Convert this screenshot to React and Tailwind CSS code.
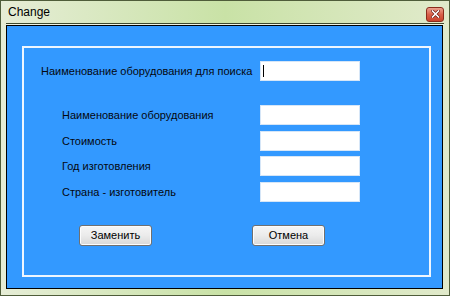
import React from "react";

const font = { fontFamily: '"Liberation Sans", Arial, sans-serif' };

function Box({ cursor }) {
  return (
    <div className="relative w-[100px] h-[20px] bg-white border border-[#d6e6f7] shrink-0">
      {cursor && <div className="absolute left-[2px] top-[3px] w-px h-[12px] bg-black" />}
    </div>
  );
}

function Row({ label, pl, lw, mt, cursor }) {
  return (
    <div className="flex items-center h-[20px]" style={{ paddingLeft: pl, marginTop: mt }}>
      <div className="text-[11px] text-[#05080f] leading-none" style={{ width: lw }}>{label}</div>
      <Box cursor={cursor} />
    </div>
  );
}

function Btn({ children }) {
  return (
    <button className="w-[73px] h-[21px] rounded-[3px] border border-[#707070] bg-gradient-to-b from-[#f6f6f6] via-[#ebebeb] to-[#d8d8d8] text-[11px] text-black leading-none flex items-center justify-center shadow-[inset_0_0_0_1px_#fcfcfc]">
      {children}
    </button>
  );
}

export default function App() {
  return (
    <div style={font} className="w-[450px] h-[296px] flex flex-col border border-[#4f5d3a] bg-gradient-to-r from-[#e6edd6] via-[#c9e2a6] to-[#e1eacb]">
      <div className="h-[22px] flex items-center justify-between pl-[7px] pr-[5px] shrink-0">
        <span className="text-[12px] text-black leading-none">Change</span>
        <div className="w-[18px] h-[15px] mt-[4px] rounded-[3px] border border-[#8a2b1c] bg-gradient-to-b from-[#eba08e] via-[#d9604a] to-[#c9432c] flex items-center justify-center">
          <svg width="9" height="8" viewBox="0 0 9 8">
            <path d="M1.5 1 L7.5 7 M7.5 1 L1.5 7" stroke="#6b1a10" strokeWidth="3" strokeLinecap="square" />
            <path d="M1.5 1 L7.5 7 M7.5 1 L1.5 7" stroke="#ffffff" strokeWidth="1.6" strokeLinecap="square" />
          </svg>
        </div>
      </div>
      <div className="h-px bg-[#3f4a2e] mx-[5px] shrink-0" />
      <div className="h-px bg-[#eef3e4] mx-[5px] shrink-0" />
      <div className="flex-1 ml-[5px] mr-[6px] mb-[6px] border border-black bg-[#3399ff] pt-[20px] pl-[15px] pr-[11px] pb-[11px] flex">
        <div className="flex-1 border-2 border-[#eef6ff] flex flex-col pt-[13px]">
          <Row label="Наименование оборудования для поиска" pl={17} lw={219} mt={0} cursor />
          <Row label="Наименование оборудования" pl={38} lw={198} mt={24} />
          <Row label="Стоимость" pl={38} lw={198} mt={6} />
          <Row label="Год изготовления" pl={38} lw={198} mt={5} />
          <Row label="Страна - изготовитель" pl={38} lw={198} mt={6} />
          <div className="flex pl-[55px] mt-[23px] gap-[100px]">
            <Btn>Заменить</Btn>
            <Btn>Отмена</Btn>
          </div>
        </div>
      </div>
    </div>
  );
}
